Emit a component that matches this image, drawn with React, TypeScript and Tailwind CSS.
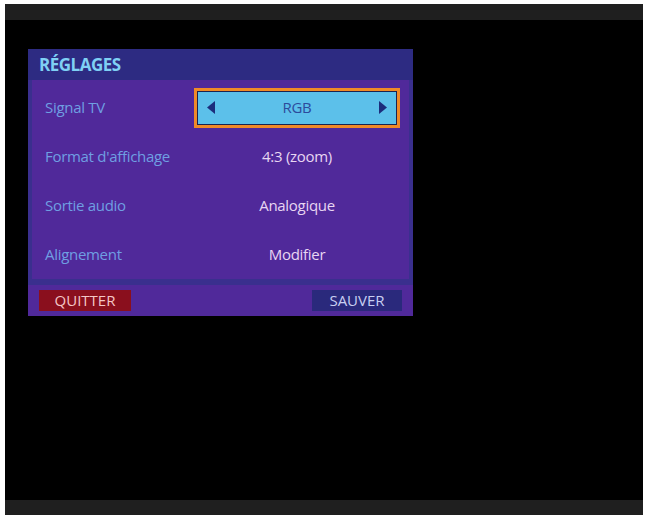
import { ReactNode } from "react";

const rows = [
  { label: "Signal TV", value: "RGB", active: true },
  { label: "Format d'affichage", value: "4:3 (zoom)" },
  { label: "Sortie audio", value: "Analogique" },
  { label: "Alignement", value: "Modifier" },
];

const font = { fontFamily: '"Open Sans", "Noto Sans", sans-serif' };

const Selector = ({ children }: { children: ReactNode }) => (
  <div className="w-[206px] h-[40px] border-[3px] border-[#f08a28]">
    <div className="h-full border border-[#1b2350] bg-[#5cc0ea] flex items-center justify-between px-[9px]">
      <svg width="8" height="13" viewBox="0 0 8 13">
        <polygon points="8,0 8,13 0,6.5" fill="#1c2d7c" />
      </svg>
      <span className="text-[#2c4b9c]">{children}</span>
      <svg width="8" height="13" viewBox="0 0 8 13">
        <polygon points="0,0 0,13 8,6.5" fill="#1c2d7c" />
      </svg>
    </div>
  </div>
);

export default function App() {
  return (
    <div className="w-[648px] h-[515px] bg-white px-[5px] pt-[4px]" style={font}>
      <div className="h-full bg-black flex flex-col">
        <div className="h-[16px] bg-[#1f1f1f]" />

        <div className="flex-1 pl-[23px] pt-[29px]">
          {/* panel */}
          <div className="w-[385px]">
            <div className="h-[31px] bg-[#2d2b82] pl-[11px] flex items-center">
              <span className="text-[17px] font-bold tracking-[-0.5px] text-[#7fd0f4]">RÉGLAGES</span>
            </div>

            <div className="bg-[#50299a] border-x-4 border-b-[6px] border-[#3a2f8e] pt-[3px]">
              {rows.map((r) => (
                <div key={r.label} className="h-[49px] flex items-center text-[15px] tracking-[-0.3px]">
                  <div className="w-[162px] pl-[13px] text-[#6f9fe2]">{r.label}</div>
                  <div className="w-[206px] flex justify-center text-[#e8d6f2]">
                    {r.active ? <Selector>{r.value}</Selector> : r.value}
                  </div>
                </div>
              ))}
            </div>

            <div className="h-[31px] bg-[#50299a] px-[11px] flex items-center justify-between text-[15px]">
              <div className="w-[92px] h-[21px] bg-[#8a0f1d] text-[#f4c6c6] flex items-center justify-center">QUITTER</div>
              <div className="w-[90px] h-[21px] bg-[#2a297c] text-[#c8cff2] flex items-center justify-center">SAUVER</div>
            </div>
          </div>
        </div>

        <div className="h-[15px] bg-[#1f1f1f]" />
      </div>
    </div>
  );
}
